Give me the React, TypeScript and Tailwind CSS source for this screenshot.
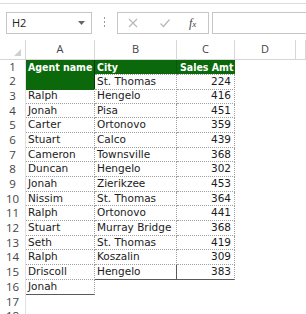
import React from 'react'

type Row = [string, string, number | null]

const ROWS: Row[] = [
  ['', 'St. Thomas', 224],
  ['Ralph', 'Hengelo', 416],
  ['Jonah', 'Pisa', 451],
  ['Carter', 'Ortonovo', 359],
  ['Stuart', 'Calco', 439],
  ['Cameron', 'Townsville', 368],
  ['Duncan', 'Hengelo', 302],
  ['Jonah', 'Zierikzee', 453],
  ['Nissim', 'St. Thomas', 364],
  ['Ralph', 'Ortonovo', 441],
  ['Stuart', 'Murray Bridge', 368],
  ['Seth', 'St. Thomas', 419],
  ['Ralph', 'Koszalin', 309],
  ['Driscoll', 'Hengelo', 383],
]

const GRID = 'grid grid-cols-[26px_69px_82px_58px_61px_1fr]'
const UI_FONT = "font-['Open_Sans',sans-serif]"
const CELL_FONT = "font-['DejaVu_Sans',sans-serif] text-[10.5px] text-[#1b1b1b]"
const SOLID_BOTTOM = 'border-b-[1.5px] [border-bottom-style:solid] border-b-[#5a5a5a]'

function RowNum({ n }: { n: number }) {
  return (
    <div className={`${UI_FONT} text-[11.5px] text-[#444] text-center leading-[14.7px] border-r border-[#e2e2e2]`}>
      {n}
    </div>
  )
}

export default function App() {
  return (
    <div className="w-[306px] h-[314px] overflow-hidden bg-white">
      {/* formula bar */}
      <div className="h-[4px] border-b border-[#dcdcdc]" />
      <div className="flex items-start pt-[8px] h-[36px]">
        <div className={`${UI_FONT} ml-[6px] w-[86px] h-[22px] border border-[#c6c6c6] flex items-center justify-between px-[5px] text-[11px] text-[#222]`}>
          <span>H2</span>
          <svg width="7" height="4" viewBox="0 0 7 4" className="mr-[1px]">
            <polygon points="0,0 7,0 3.5,4" fill="#666" />
          </svg>
        </div>
        <div className="ml-[12px] mt-[5px] flex flex-col gap-[2px]">
          <span className="w-[1px] h-[2px] bg-[#999]" />
          <span className="w-[1px] h-[2px] bg-[#999]" />
          <span className="w-[1px] h-[2px] bg-[#999]" />
        </div>
        <div className="ml-[12px] w-[92px] h-[22px] border border-[#c6c6c6] flex items-center">
          <svg width="12" height="12" viewBox="0 0 12 12" className="ml-[9px]">
            <path d="M2 2 L10 10 M10 2 L2 10" stroke="#b8b8b8" strokeWidth="1.2" fill="none" />
          </svg>
          <svg width="12" height="12" viewBox="0 0 12 12" className="ml-[20px]">
            <path d="M1.5 6.5 L4.5 9.5 L10.5 2.5" stroke="#b8b8b8" strokeWidth="1.3" fill="none" />
          </svg>
          <span className="ml-[18px] font-['Liberation_Serif',serif] italic text-[12px] text-[#444] leading-none">
            f<span className="text-[9px]">x</span>
          </span>
        </div>
        <div className="ml-[3px] flex-1 h-[22px] border border-[#c6c6c6] border-r-0" />
      </div>

      {/* column headers */}
      <div className={`${GRID} h-[19.5px] border-b border-[#d6d6d6] ${UI_FONT} text-[11px] text-[#444]`}>
        <div className="border-r border-[#d6d6d6] flex items-end justify-end pr-[4px] pb-[3px]">
          <svg width="7" height="7" viewBox="0 0 7 7">
            <polygon points="7,0 7,7 0,7" fill="#d0d0d0" />
          </svg>
        </div>
        {['A', 'B', 'C', 'D', ''].map((c, i) => (
          <div key={i} className="border-r border-[#d6d6d6] flex items-end justify-center pb-[1px]">
            {c}
          </div>
        ))}
      </div>

      {/* row 1 */}
      <div className={`${GRID} h-[14.7px]`}>
        <RowNum n={1} />
        <div className="bg-[#0b690b] border-r border-[#053605] text-white font-bold font-['DejaVu_Sans_Condensed',sans-serif] text-[10.5px] leading-[14.7px] pl-[2px] whitespace-nowrap overflow-hidden">
          Agent name
        </div>
        <div className="bg-[#0b690b] border-r border-[#0a5a0a] text-white font-bold font-['DejaVu_Sans_Condensed',sans-serif] text-[10.5px] leading-[14.7px] pl-[2px]">
          City
        </div>
        <div className="bg-[#0b690b] text-white font-bold font-['DejaVu_Sans_Condensed',sans-serif] text-[10.5px] leading-[14.7px] pl-[3px] whitespace-nowrap overflow-hidden">
          Sales Amt
        </div>
        <div />
        <div />
      </div>

      {/* data rows 2-15 */}
      {ROWS.map(([agent, city, amt], i) => {
        const n = i + 2
        const last = n === 15
        return (
          <div key={n} className={`${GRID} h-[14.7px]`}>
            <RowNum n={n} />
            {n === 2 ? (
              <div className="bg-[#0b690b] border-r border-[#053605]" />
            ) : (
              <div className={`${CELL_FONT} leading-[13.7px] pl-[2px] border-b border-r border-dotted border-[#a0a0a0] whitespace-nowrap`}>
                {agent}
              </div>
            )}
            <div
              className={`${CELL_FONT} leading-[13.7px] pl-[2px] whitespace-nowrap overflow-hidden border-dotted border-[#a0a0a0] ${
                last ? `${SOLID_BOTTOM} border-r-[1.5px] [border-right-style:solid] border-r-[#5a5a5a]` : 'border-b border-r'
              } ${n === 2 ? 'border-t' : ''}`}
            >
              {city}
            </div>
            <div
              className={`${CELL_FONT} leading-[13.7px] pr-[3px] text-right border-r border-dotted border-[#a0a0a0] ${
                last ? SOLID_BOTTOM : 'border-b'
              } ${n === 2 ? 'border-t' : ''}`}
            >
              {amt}
            </div>
            <div />
            <div />
          </div>
        )
      })}

      {/* row 16 */}
      <div className={`${GRID} h-[14.7px]`}>
        <RowNum n={16} />
        <div className={`${CELL_FONT} leading-[13.7px] pl-[2px] border-r border-dotted border-[#a0a0a0] ${SOLID_BOTTOM}`}>
          Jonah
        </div>
        <div />
        <div />
        <div />
        <div />
      </div>

      {[17, 18].map((n) => (
        <div key={n} className={`${GRID} h-[14.7px]`}>
          <RowNum n={n} />
        </div>
      ))}
    </div>
  )
}
